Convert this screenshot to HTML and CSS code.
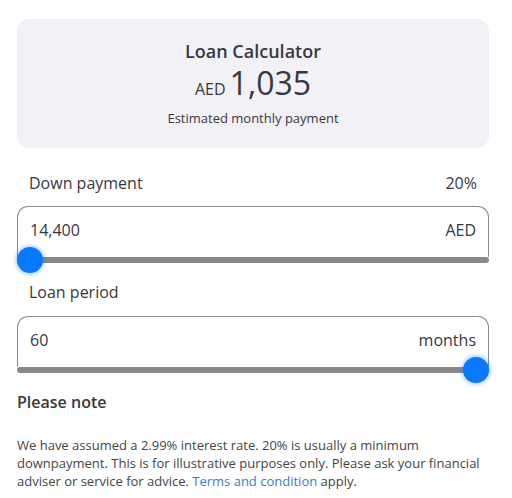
FILE: index.html
```html
<!DOCTYPE html>
<html>
<head>
<meta charset="utf-8">
<link rel="stylesheet" href="styles.css">
</head>
<body>
<div class="wrap">
  <section class="summary">
    <h1 class="title">Loan Calculator</h1>
    <div class="amount"><span class="cur">AED</span><span class="num">1,035</span></div>
    <div class="sub">Estimated monthly payment</div>
  </section>

  <div class="label-row first">
    <span>Down payment</span><span>20%</span>
  </div>
  <div class="field">
    <span class="val">14,400</span><span class="unit">AED</span>
  </div>
  <input class="range" type="range" min="0" max="100" value="0">

  <div class="label-row">
    <span>Loan period</span>
  </div>
  <div class="field">
    <span class="val">60</span><span class="unit">months</span>
  </div>
  <input class="range" type="range" min="0" max="100" value="100">

  <h2 class="note-title">Please note</h2>
  <p class="note">We have assumed a 2.99% interest rate. 20% is usually a minimum downpayment. This is for illustrative purposes only. Please ask your financial adviser or service for advice. <a href="#" class="link">Terms and condition</a> apply.</p>
</div>
</body>
</html>
```
FILE: styles.css
```css
* { box-sizing: border-box; }
html, body { margin: 0; padding: 0; background: #fff; }
body {
  font-family: "Open Sans", "Noto Sans", sans-serif;
  color: #383842;
}
.wrap {
  width: 506px;
  padding: 19px 0 0 17px;
}
.wrap > * { width: 472px; }
.summary {
  height: 129px;
  background: #f2f2f6;
  border-radius: 12px;
  display: flex;
  flex-direction: column;
  align-items: center;
  padding-top: 20px;
}
.title {
  margin: 0;
  font-size: 18px;
  font-weight: 600;
  line-height: 24px;
}
.amount {
  display: flex;
  align-items: baseline;
  gap: 4px;
  line-height: 40px;
  margin-top: 0;
}
.cur { font-size: 16px; }
.num { font-size: 32px; }
.sub {
  font-size: 13px;
  line-height: 18px;
  margin-top: 0;
}
.label-row {
  display: flex;
  justify-content: space-between;
  font-size: 16px;
  line-height: 22px;
  padding: 0 12px 0 12px;
  margin-top: 8px;
  margin-bottom: 13px;
}
.label-row.first { margin-top: 24px; margin-bottom: 12px; }
.field {
  height: 51px;
  border: 1px solid #8c8c8c;
  border-bottom: none;
  border-radius: 11px 11px 0 0;
  display: flex;
  justify-content: space-between;
  padding: 11px 12px 0 12px;
  font-size: 16px;
  line-height: 24px;
}
.range {
  -webkit-appearance: none;
  appearance: none;
  display: block;
  margin: -10px 0 0 0;
  height: 26px;
  background: transparent;
  padding: 0;
}
.range::-webkit-slider-runnable-track {
  height: 6px;
  background: #888;
  border-radius: 3px;
}
.range::-webkit-slider-thumb {
  -webkit-appearance: none;
  width: 26px;
  height: 26px;
  margin-top: -10px;
  border-radius: 50%;
  background: #0a78ff;
  box-shadow: 0 0 4px 1px rgba(10, 120, 255, 0.45);
  border: none;
}
.note-title {
  margin: 8px 0 0 0;
  font-size: 16px;
  font-weight: 600;
  line-height: 22px;
}
.note {
  margin: 23px 0 0 0;
  font-size: 13px;
  line-height: 18px;
  color: #444;
}
.link { color: #3b7ad9; text-decoration: none; }
```
